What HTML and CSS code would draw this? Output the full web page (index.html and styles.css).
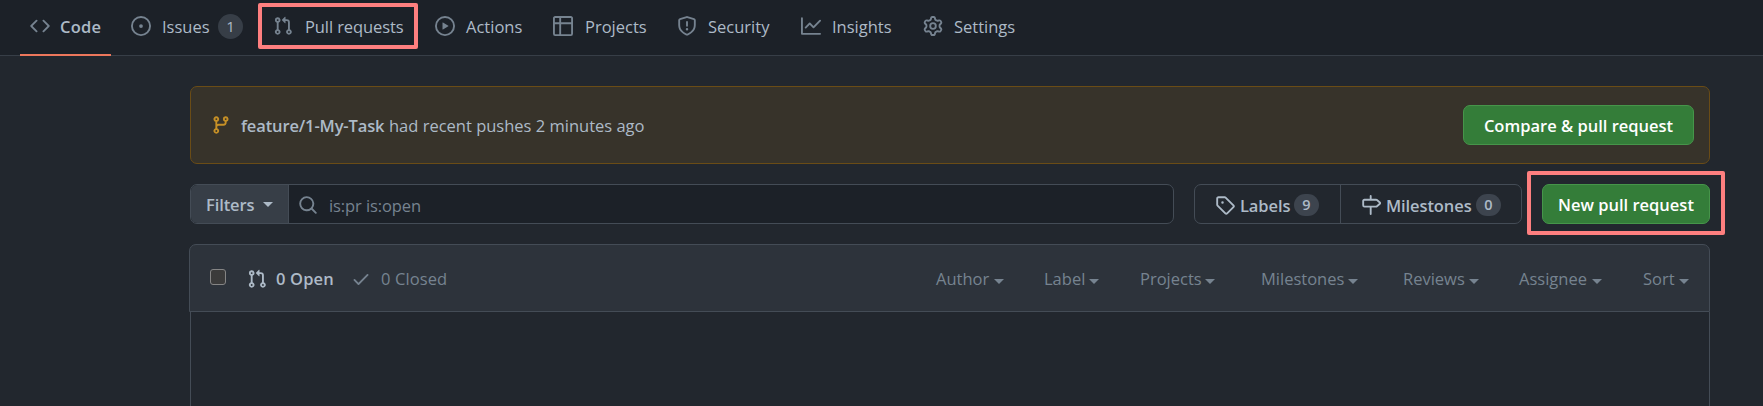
FILE: index.html
```html
<!DOCTYPE html>
<html lang="en">
<head>
<meta charset="utf-8">
<title>Pull requests</title>
<link rel="stylesheet" href="styles.css">
</head>
<body>
<svg class="defs" width="0" height="0">
  <symbol id="code" viewBox="0 0 16 16"><path d="m11.28 3.22 4.25 4.25a.75.75 0 0 1 0 1.06l-4.25 4.25a.749.749 0 0 1-1.275-.326.749.749 0 0 1 .215-.734L13.94 8l-3.72-3.72a.749.749 0 0 1 .326-1.275.749.749 0 0 1 .734.215Zm-6.56 0a.751.751 0 0 1 1.042.018.751.751 0 0 1 .018 1.042L2.06 8l3.72 3.72a.749.749 0 0 1-.326 1.275.749.749 0 0 1-.734-.215L.47 8.53a.75.75 0 0 1 0-1.06Z"/></symbol>
  <symbol id="issue" viewBox="0 0 16 16"><path d="M8 9.5a1.5 1.5 0 1 0 0-3 1.5 1.5 0 0 0 0 3Z"/><path d="M8 0a8 8 0 1 1 0 16A8 8 0 0 1 8 0ZM1.5 8a6.5 6.5 0 1 0 13 0 6.5 6.5 0 0 0-13 0Z"/></symbol>
  <symbol id="pr" viewBox="0 0 16 16"><path d="M1.5 3.25a2.25 2.25 0 1 1 3 2.122v5.256a2.251 2.251 0 1 1-1.5 0V5.372A2.25 2.25 0 0 1 1.5 3.25Zm5.677-.177L9.573.677A.25.25 0 0 1 10 .854V2.5h1A2.5 2.5 0 0 1 13.5 5v5.628a2.251 2.251 0 1 1-1.5 0V5a1 1 0 0 0-1-1h-1v1.646a.25.25 0 0 1-.427.177L7.177 3.427a.25.25 0 0 1 0-.354ZM3.75 2.5a.75.75 0 1 0 0 1.5.75.75 0 0 0 0-1.5Zm0 9.5a.75.75 0 1 0 0 1.5.75.75 0 0 0 0-1.5Zm8.25.75a.75.75 0 1 0 1.5 0 .75.75 0 0 0-1.5 0Z"/></symbol>
  <symbol id="play" viewBox="0 0 16 16"><path d="M8 0a8 8 0 1 1 0 16A8 8 0 0 1 8 0ZM1.5 8a6.5 6.5 0 1 0 13 0 6.5 6.5 0 0 0-13 0Zm4.879-2.773 4.264 2.559a.25.25 0 0 1 0 .428l-4.264 2.559A.25.25 0 0 1 6 10.559V5.442a.25.25 0 0 1 .379-.215Z"/></symbol>
  <symbol id="table" viewBox="0 0 16 16"><path d="M0 1.75C0 .784.784 0 1.75 0h12.5C15.216 0 16 .784 16 1.75v12.5A1.75 1.75 0 0 1 14.25 16H1.75A1.75 1.75 0 0 1 0 14.25ZM6.5 6.5v8h7.75a.25.25 0 0 0 .25-.25V6.5Zm8-1.5V1.75a.25.25 0 0 0-.25-.25H6.5V5Zm-13 1.5v7.75c0 .138.112.25.25.25H5v-8ZM5 5V1.5H1.75a.25.25 0 0 0-.25.25V5Z"/></symbol>
  <symbol id="shield" viewBox="0 0 16 16"><path d="M7.467.133a1.748 1.748 0 0 1 1.066 0l5.25 1.68A1.75 1.75 0 0 1 15 3.48V7c0 1.566-.32 3.182-1.303 4.682-.983 1.498-2.585 2.813-5.032 3.855a1.697 1.697 0 0 1-1.33 0c-2.447-1.042-4.049-2.357-5.032-3.855C1.32 10.182 1 8.566 1 7V3.48a1.75 1.75 0 0 1 1.217-1.667Zm.61 1.429a.25.25 0 0 0-.153 0l-5.25 1.68a.25.25 0 0 0-.174.238V7c0 1.358.275 2.666 1.057 3.86.784 1.194 2.121 2.34 4.366 3.297a.196.196 0 0 0 .154 0c2.245-.956 3.582-2.104 4.366-3.298C13.225 9.666 13.5 8.36 13.5 7V3.48a.251.251 0 0 0-.174-.237l-5.25-1.68ZM8.75 4.75v3a.75.75 0 0 1-1.5 0v-3a.75.75 0 0 1 1.5 0ZM9 10.5a1 1 0 1 1-2 0 1 1 0 0 1 2 0Z"/></symbol>
  <symbol id="graph" viewBox="0 0 16 16"><path d="M1.5 1.75V13.5h13.75a.75.75 0 0 1 0 1.5H.75a.75.75 0 0 1-.75-.75V1.75a.75.75 0 0 1 1.5 0Zm14.28 2.53-5.25 5.25a.75.75 0 0 1-1.06 0L7 7.06 4.28 9.78a.751.751 0 0 1-1.042-.018.751.751 0 0 1-.018-1.042l3.25-3.25a.75.75 0 0 1 1.06 0L10 7.94l4.72-4.72a.751.751 0 0 1 1.042.018.751.751 0 0 1 .018 1.042Z"/></symbol>
  <symbol id="gear" viewBox="0 0 16 16"><path d="M8 0a8.2 8.2 0 0 1 .701.031C9.444.095 9.99.645 10.16 1.29l.288 1.107c.018.066.079.158.212.224.231.114.454.243.668.386.123.082.233.09.299.071l1.103-.303c.644-.176 1.392.021 1.82.63.27.385.506.792.704 1.218.315.675.111 1.422-.364 1.891l-.814.806c-.049.048-.098.147-.088.294.016.257.016.515 0 .772-.01.147.038.246.088.294l.814.806c.475.469.679 1.216.364 1.891a7.977 7.977 0 0 1-.704 1.217c-.428.61-1.176.807-1.82.63l-1.102-.302c-.067-.019-.177-.011-.3.071a5.909 5.909 0 0 1-.668.386c-.133.066-.194.158-.211.224l-.29 1.106c-.168.646-.715 1.196-1.458 1.26a8.006 8.006 0 0 1-1.402 0c-.743-.064-1.289-.614-1.458-1.26l-.289-1.106c-.018-.066-.079-.158-.212-.224a5.738 5.738 0 0 1-.668-.386c-.123-.082-.233-.09-.299-.071l-1.103.303c-.644.176-1.392-.021-1.82-.63a8.12 8.12 0 0 1-.704-1.218c-.315-.675-.111-1.422.363-1.891l.815-.806c.05-.048.098-.147.088-.294a6.214 6.214 0 0 1 0-.772c.01-.147-.038-.246-.088-.294l-.815-.806C.635 6.045.431 5.298.746 4.623a7.92 7.92 0 0 1 .704-1.217c.428-.61 1.176-.807 1.82-.63l1.102.302c.067.019.177.011.3-.071.214-.143.437-.272.668-.386.133-.066.194-.158.211-.224l.29-1.106C6.009.645 6.556.095 7.299.03 7.53.01 7.764 0 8 0Zm-.571 1.525c-.036.003-.108.036-.137.146l-.289 1.105c-.147.561-.549.967-.998 1.189-.173.086-.34.183-.5.29-.417.278-.97.423-1.529.27l-1.103-.303c-.109-.03-.175.016-.195.045-.22.312-.412.644-.573.99-.014.031-.021.11.059.19l.815.806c.411.406.562.957.53 1.456a4.709 4.709 0 0 0 0 .582c.032.499-.119 1.05-.53 1.456l-.815.806c-.081.08-.073.159-.059.19.162.346.353.677.573.989.02.03.085.076.195.046l1.102-.303c.56-.153 1.113-.008 1.53.27.161.107.328.204.501.29.447.222.85.629.997 1.189l.289 1.105c.029.109.101.143.137.146a6.6 6.6 0 0 0 1.142 0c.036-.003.108-.036.137-.146l.289-1.105c.147-.561.549-.967.998-1.189.173-.086.34-.183.5-.29.417-.278.97-.423 1.529-.27l1.103.303c.109.029.175-.016.195-.045.22-.313.411-.644.573-.99.014-.031.021-.11-.059-.19l-.815-.806c-.411-.406-.562-.957-.53-1.456a4.709 4.709 0 0 0 0-.582c-.032-.499.119-1.05.53-1.456l.815-.806c.081-.08.073-.159.059-.19a6.464 6.464 0 0 0-.573-.989c-.02-.03-.085-.076-.195-.046l-1.102.303c-.56.153-1.113.008-1.53-.27a4.44 4.44 0 0 0-.501-.29c-.447-.222-.85-.629-.997-1.189l-.289-1.105c-.029-.11-.101-.143-.137-.146a6.6 6.6 0 0 0-1.142 0ZM11 8a3 3 0 1 1-6 0 3 3 0 0 1 6 0ZM9.5 8a1.5 1.5 0 1 0-3.001.001A1.5 1.5 0 0 0 9.5 8Z"/></symbol>
  <symbol id="branch" viewBox="0 0 16 16"><path d="M9.5 3.25a2.25 2.25 0 1 1 3 2.122V6A2.5 2.5 0 0 1 10 8.5H6a1 1 0 0 0-1 1v1.128a2.251 2.251 0 1 1-1.5 0V5.372a2.25 2.25 0 1 1 1.5 0v1.836A2.493 2.493 0 0 1 6 7h4a1 1 0 0 0 1-1v-.628A2.25 2.25 0 0 1 9.5 3.25Zm-6 0a.75.75 0 1 0 1.5 0 .75.75 0 0 0-1.5 0Zm8.25-.75a.75.75 0 1 0 0 1.5.75.75 0 0 0 0-1.5ZM4.25 12a.75.75 0 1 0 0 1.5.75.75 0 0 0 0-1.5Z"/></symbol>
  <symbol id="search" viewBox="0 0 16 16"><path d="M10.68 11.74a6 6 0 0 1-7.922-8.982 6 6 0 0 1 8.982 7.922l3.04 3.04a.749.749 0 0 1-.326 1.275.749.749 0 0 1-.734-.215ZM11.5 7a4.499 4.499 0 1 0-8.997 0A4.499 4.499 0 0 0 11.5 7Z"/></symbol>
  <symbol id="tag" viewBox="0 0 16 16"><path d="M1 7.775V2.75C1 1.784 1.784 1 2.75 1h5.025c.464 0 .91.184 1.238.513l6.25 6.25a1.75 1.75 0 0 1 0 2.474l-5.026 5.026a1.75 1.75 0 0 1-2.474 0l-6.25-6.25A1.752 1.752 0 0 1 1 7.775Zm1.5 0c0 .066.026.13.073.177l6.25 6.25a.25.25 0 0 0 .354 0l5.025-5.025a.25.25 0 0 0 0-.354l-6.25-6.25a.25.25 0 0 0-.177-.073H2.75a.25.25 0 0 0-.25.25ZM6 5a1 1 0 1 1 0 2 1 1 0 0 1 0-2Z"/></symbol>
  <symbol id="milestone" viewBox="0 0 16 16"><path d="M7.75 0a.75.75 0 0 1 .75.75V3h3.634c.414 0 .814.147 1.13.414l2.07 1.75a1.75 1.75 0 0 1 0 2.672l-2.07 1.75a1.75 1.75 0 0 1-1.13.414H8.5v5.25a.75.75 0 0 1-1.5 0V10H2.75A1.75 1.75 0 0 1 1 8.25v-3.5C1 3.784 1.784 3 2.75 3H7V.75A.75.75 0 0 1 7.75 0Zm4.384 8.5a.25.25 0 0 0 .161-.06l2.07-1.75a.248.248 0 0 0 0-.38l-2.07-1.75a.25.25 0 0 0-.161-.06H2.75a.25.25 0 0 0-.25.25v3.5c0 .138.112.25.25.25h9.384Z"/></symbol>
  <symbol id="check" viewBox="0 0 16 16"><path d="M13.78 4.22a.75.75 0 0 1 0 1.06l-7.25 7.25a.75.75 0 0 1-1.06 0L2.22 9.28a.751.751 0 0 1 .018-1.042.751.751 0 0 1 1.042-.018L6 10.94l6.72-6.72a.75.75 0 0 1 1.06 0Z"/></symbol>
</svg>

<nav class="nav">
  <a class="tab tab-code active"><svg class="icon"><use href="#code"/></svg><span class="t">Code</span></a>
  <a class="tab tab-issues"><svg class="icon"><use href="#issue"/></svg><span class="t">Issues</span><span class="count">1</span></a>
  <a class="tab tab-pulls"><svg class="icon"><use href="#pr"/></svg><span class="t">Pull requests</span></a>
  <a class="tab tab-actions"><svg class="icon"><use href="#play"/></svg><span class="t">Actions</span></a>
  <a class="tab tab-projects"><svg class="icon"><use href="#table"/></svg><span class="t">Projects</span></a>
  <a class="tab tab-security"><svg class="icon"><use href="#shield"/></svg><span class="t">Security</span></a>
  <a class="tab tab-insights"><svg class="icon"><use href="#graph"/></svg><span class="t">Insights</span></a>
  <a class="tab tab-settings"><svg class="icon"><use href="#gear"/></svg><span class="t">Settings</span></a>
</nav>

<main class="main">
  <section class="banner">
    <svg class="icon"><use href="#branch"/></svg>
    <p class="message"><strong>feature/1-My-Task</strong><span class="rest">had recent pushes 2 minutes ago</span></p>
    <button class="btn btn-compare">Compare &amp; pull request</button>
  </section>

  <section class="toolbar">
    <div class="search">
      <div class="filters"><span class="filters-text">Filters</span><i class="caret"></i></div>
      <div class="query"><svg class="icon"><use href="#search"/></svg><span class="query-text">is:pr is:open</span></div>
    </div>
    <div class="links">
      <a class="link link-labels"><svg class="icon"><use href="#tag"/></svg><span class="t">Labels</span><span class="count">9</span></a>
      <a class="link link-milestones"><svg class="icon"><use href="#milestone"/></svg><span class="t">Milestones</span><span class="count">0</span></a>
    </div>
    <div class="new"><button class="btn btn-new">New pull request</button></div>
  </section>

  <section class="list">
    <header class="list-head">
      <span class="checkbox"></span>
      <svg class="icon icon-open"><use href="#pr"/></svg><span class="open">0 Open</span>
      <svg class="icon icon-closed"><use href="#check"/></svg><span class="closed">0 Closed</span>
      <div class="menus">
        <span class="menu menu-author"><span class="t">Author</span><i class="caret"></i></span>
        <span class="menu menu-label"><span class="t">Label</span><i class="caret"></i></span>
        <span class="menu menu-projects"><span class="t">Projects</span><i class="caret"></i></span>
        <span class="menu menu-milestones"><span class="t">Milestones</span><i class="caret"></i></span>
        <span class="menu menu-reviews"><span class="t">Reviews</span><i class="caret"></i></span>
        <span class="menu menu-assignee"><span class="t">Assignee</span><i class="caret"></i></span>
        <span class="menu menu-sort"><span class="t">Sort</span><i class="caret"></i></span>
      </div>
    </header>
    <div class="list-body"></div>
  </section>
</main>
</body>
</html>
```
FILE: styles.css
```css
*, *::before, *::after { box-sizing: border-box; }
body {
  margin: 0;
  height: 406px;
  overflow: hidden;
  display: flex;
  flex-direction: column;
  background: #22272e;
  color: #adbac7;
  font: 16.5px/24px "Open Sans", "Noto Sans", sans-serif;
  white-space: nowrap;
}
.defs { position: absolute; }
.icon { width: 20px; height: 20px; flex: none; fill: currentColor; }
.t { flex: none; padding-top: 2px; }
.caret {
  flex: none;
  border: 5px solid transparent;
  border-top-color: currentColor;
  border-bottom: 0;
}

/* Repository tabs */
.nav {
  flex: none;
  height: 56px;
  display: flex;
  gap: 10px;
  padding-left: 20px;
  background: #1c2128;
  border-bottom: 1px solid #373e47;
}
.tab {
  position: relative;
  height: 55px;
  flex: none;
  display: flex;
  align-items: center;
  gap: 11px;
  padding: 0 0 3px 10px;
}
.tab .icon { color: #768390; }
.tab .count {
  width: 25px;
  height: 25px;
  border-radius: 13px;
  background: #373e47;
  font-size: 15px;
  line-height: 25px;
  text-align: center;
}
.active { font-weight: 600; }
.active::after {
  content: "";
  position: absolute;
  left: 0;
  right: 0;
  bottom: -1px;
  height: 2px;
  background: #ec775c;
}
.tab-code { width: 91px; }
.tab-code .t { width: 41px; margin-left: -1px; letter-spacing: .2px; }
.tab-issues { width: 132px; }
.tab-issues .t { width: 45px; }
.tab-pulls { width: 152px; gap: 12px; }
.tab-pulls .t { letter-spacing: -.1px; }
.tab-pulls::before {
  content: "";
  position: absolute;
  left: -5px;
  top: 3px;
  width: 160px;
  height: 46px;
  border: 4px solid #fe7f7f;
  border-radius: 2px;
}
.tab-actions { width: 108px; }
.tab-projects { width: 114px; }
.tab-projects .t { margin-left: 1px; }
.tab-security { width: 114px; }
.tab-insights { width: 112px; }
.tab-settings { width: 114px; }

.main { flex: 1; margin-left: 190px; width: 1520px; display: flex; flex-direction: column; }

/* Recent push banner */
.banner {
  flex: none;
  height: 78px;
  margin-top: 30px;
  display: flex;
  align-items: center;
  padding: 0 15px 0 20px;
  background: #37332a;
  border: 1px solid #6a4c16;
  border-radius: 7px;
}
.banner .icon { color: #c69026; }
.message { display: flex; margin: 0 auto 0 10px; padding-top: 1px; }
.message strong { font-weight: 600; width: 148px; letter-spacing: -.13px; }
.btn {
  height: 40px;
  padding: 2px 0 0;
  border: 1px solid #46954a;
  border-radius: 7px;
  background: #347d39;
  color: #fff;
  font: 600 16.5px/24px "Open Sans", "Noto Sans", sans-serif;
  text-align: center;
}
.btn-compare { width: 231px; }

/* Search and links */
.toolbar { flex: none; display: flex; height: 40px; margin-top: 20px; }
.search { width: 984px; display: flex; border: 1px solid #444c56; border-radius: 7px; background: #1c2128; overflow: hidden; }
.filters {
  width: 98px;
  display: flex;
  align-items: center;
  padding-left: 15px;
  background: #373e47;
  border-right: 1px solid #444c56;
  font-weight: 600;
}
.filters-text { width: 57px; letter-spacing: -.1px; padding-top: 1px; }
.query { display: flex; align-items: center; padding: 2px 0 0 9px; color: #768390; }
.query-text { margin-left: 11px; padding-top: 1px; letter-spacing: -.1px; }
.links { width: 328px; margin-left: 20px; display: flex; border: 1px solid #444c56; border-radius: 7px; font-weight: 600; }
.link { display: flex; align-items: center; padding: 2px 0 0 20px; }
.link .count {
  width: 25px;
  height: 22px;
  border-radius: 11px;
  background: #3d444e;
  font-size: 14.5px;
  line-height: 22px;
  text-align: center;
}
.link-labels { width: 146px; border-right: 1px solid #444c56; }
.link-labels .t { width: 50px; margin: 0 4px 0 5px; letter-spacing: -.1px; }
.link-milestones .t { width: 86px; margin: 0 4px 0 5px; letter-spacing: -.1px; }
.new { position: relative; margin-left: 20px; }
.new::before {
  content: "";
  position: absolute;
  left: -15px;
  top: -13px;
  width: 198px;
  height: 64px;
  border: 4px solid #fe7f7f;
  border-radius: 2px;
}
.btn-new { width: 168px; }

/* Pull request list */
.list { flex: 1; display: flex; flex-direction: column; margin-top: 20px; }
.list-head {
  flex: none;
  height: 68px;
  width: 1521px;
  margin-left: -1px;
  display: flex;
  align-items: center;
  padding: 2px 0 0 20px;
  background: #2d333b;
  border: 1px solid #444c56;
  border-radius: 7px 7px 0 0;
}
.list-body { flex: 1; border: solid #444c56; border-width: 0 1px; }
.checkbox { width: 16px; height: 16px; margin-bottom: 5px; border: 1px solid #858585; border-radius: 3px; background: #3b3b3b; }
.icon-open { margin-left: 21px; }
.open { width: 76px; margin-left: 9px; font-weight: 600; letter-spacing: .15px; }
.icon-closed { color: #768390; margin-left: -1px; }
.closed { width: 69px; margin-left: 10px; color: #768390; letter-spacing: .1px; }
.menus { display: flex; margin-left: 486px; color: #768390; }
.menu { display: flex; align-items: center; }
.menu .t { padding-top: 0; }
.menu .caret { margin-top: 4px; }
.menu-author { width: 108px; }
.menu-author .t { width: 58px; }
.menu-label { width: 96px; }
.menu-label .t { width: 45px; }
.menu-projects { width: 121px; }
.menu-projects .t { width: 65px; }
.menu-milestones { width: 142px; }
.menu-milestones .t { width: 87px; }
.menu-reviews { width: 116px; }
.menu-reviews .t { width: 66px; }
.menu-assignee { width: 124px; }
.menu-assignee .t { width: 73px; }
.menu-sort .t { width: 36px; }
```
